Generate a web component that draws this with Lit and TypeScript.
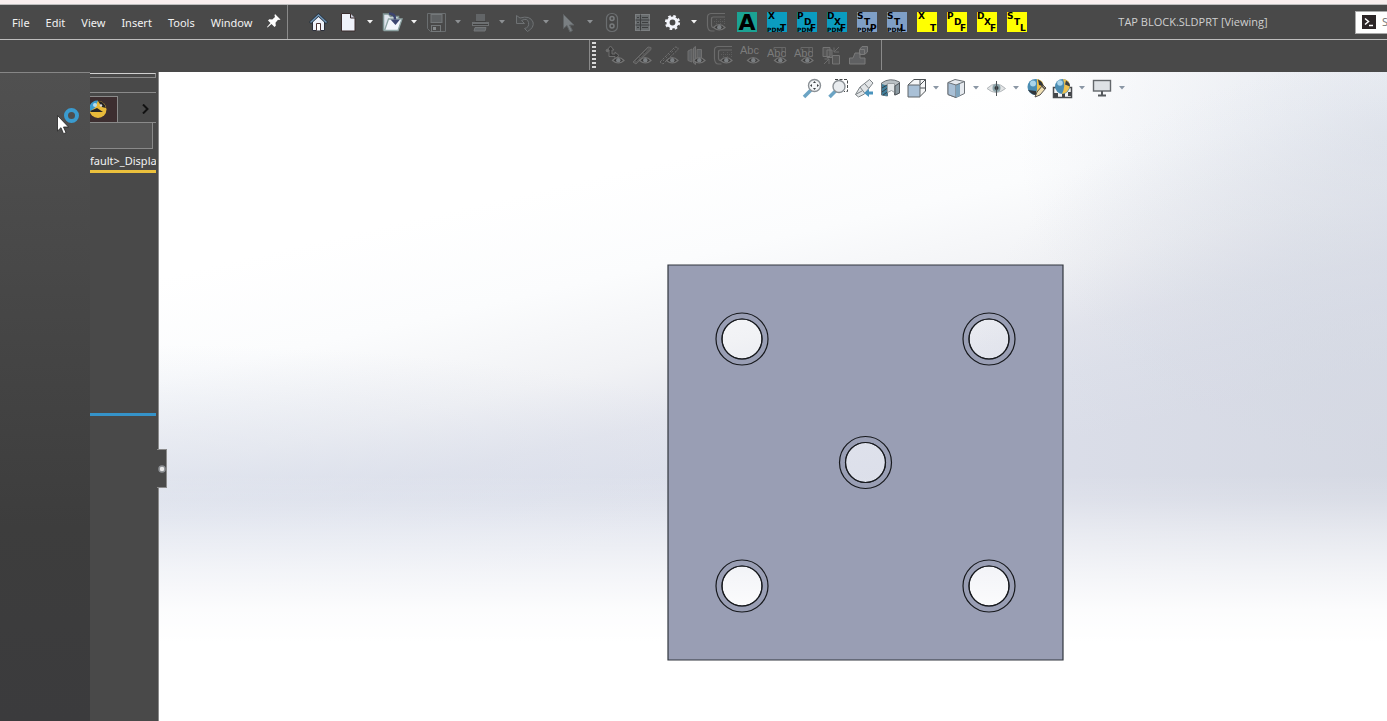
import { LitElement, html, svg, css } from "lit";
import { customElement } from "lit/decorators.js";

const eye = svg`<path d="M7.500 15.500q5.500-6 11.500 0q-5.500 5-11.500 0z" fill="#3b3b3b" stroke="#737373" stroke-width="1.200"/><circle cx="13.300" cy="15.300" r="2.200" fill="#7b7f82"/>`;

const icons: Record<string, unknown> = {
  home: svg`<path d="M4.500 9v9.500h12V9L10.500 4z" fill="#eef2fa" stroke="#2b2f3a"/><path d="M2 11L10.500 3l8.500 8" fill="none" stroke="#23303c" stroke-width="3"/><path d="M2.500 10.500L10.500 3l8 7.500" fill="none" stroke="#6f93b4" stroke-width="1.500"/><path d="M8.500 18.500v-7h4v7" fill="#fff" stroke="#4b3434"/>`,
  doc: svg`<path d="M3.500 1.500h9l4.500 4.500v13H3.500z" fill="#eff2fa" stroke="#3a2d2d"/><path d="M12.500 1.500V6H17" fill="#c9cedb" stroke="#3a2d2d"/>`,
  open: svg`<path d="M1.500 18.500V2h5l2 2.500h8v4" fill="#dfe5ee" stroke="#7f9595" stroke-width="1.500"/><path d="M2.500 18.500L6.500 7h13.500l-4 11.500z" fill="#f2f4fb" stroke="#8ea4a4" stroke-width="1.300"/><path d="M7 1.500q6.500 0 6 6" fill="none" stroke="#3c4470" stroke-width="2.500"/><path d="M8.500 7.500h9.500L13.500 13z" fill="#3c4470"/>`,
  save: svg`<path d="M1.500 1.500h18v18h-15l-3-3z" fill="none" stroke="#6a6e70" stroke-width="1"/><rect x="5" y="2.500" width="11" height="8" fill="#5e6163" stroke="#74787a"/><rect x="5.500" y="13.500" width="9" height="6" fill="#4a4a4a" stroke="#74787a"/><rect x="7" y="15" width="3" height="3" fill="#85898b"/>`,
  print: svg`<path d="M6 2h9v7H6z" fill="#626567"/><path d="M2 10h17v4H2z" fill="#6d7072"/><path d="M3 12.500h15M5 9.500h11" stroke="#3f3f3f"/><path d="M5 15.500h11l-1 3.500H4z" fill="#63676a" stroke="#747779"/>`,
  undo: svg`<path d="M2.500 3.500v8h8l-3-3q6-3 7 2t-4 6l3 3q7-4 5.500-9.500Q16 3 6 6z" fill="#4c4e4f" stroke="#6f7274"/>`,
  select: svg`<path d="M5.500 2.500v14l3.500-3 3 6.500 2.500-1.500-3-5.500h4.500z" fill="#7a7f82" stroke="#606466"/>`,
  rebuild: svg`<rect x="4.500" y="1.500" width="11" height="18" rx="5" fill="#474747" stroke="#6b6e70" stroke-width="1.200"/><circle cx="10" cy="6.500" r="2" fill="#4a4a4a" stroke="#787b7d" stroke-width="1.500"/><circle cx="10" cy="14" r="2" fill="#4a4a4a" stroke="#787b7d" stroke-width="1.500"/>`,
  props: svg`<rect x="3.500" y="2.500" width="14" height="16" fill="#686c6e" stroke="#7c7f81"/><path d="M8.500 2.500v16M3.500 8h14M3.500 13h14" stroke="#3d3f40"/><path d="M10 5.500h6M10 10.500h6M10 15.500h6M5 5.500h2M5 10.500h2M5 15.500h2" stroke="#3d3f40"/>`,
  gear: svg`<circle cx="10.500" cy="10.500" r="4.500" fill="none" stroke="#f3f5fb" stroke-width="3.200"/><circle cx="10.500" cy="10.500" r="6.500" fill="none" stroke="#f3f5fb" stroke-width="2.200" stroke-dasharray="2.600 2.505"/>`,
  sketch: svg`<path d="M19 1.500H5Q1.500 2 1.500 5v9q.5 5 4 5h3M19 5H7.500Q5.500 5 5.500 7v6q0 2.500 2 2.500" fill="none" stroke="#6b6b6b" stroke-width="1.200"/><path d="M18.500 7v5M14.500 7v5M10.500 7v5M8 9.500h11" stroke="#5c5c5c" stroke-dasharray="1 1"/>${eye}`,
  points: svg`<path d="M2 5l3.500-4L9 5H7v4h3V7l4 3.500-4 3.500v-2.500H4V5z" fill="#3d3d3d" stroke="#6f6f6f"/><circle cx="2.500" cy="5.500" r="1.800" fill="#6c6c6c"/>${eye}`,
  line: svg`<path d="M1 17L16 2l3 .5v2L4 19z" fill="#585858" stroke="#6b6b6b"/><path d="M4 16L16 4" stroke="#3d3d3d" stroke-dasharray="4 1.500"/>${eye}`,
  axis: svg`<path d="M1 17L16 2l3 .5v2L4 19z" fill="#464646" stroke="#707070" stroke-dasharray="2.500 1"/><path d="M4 16L16 4" stroke="#6b6b6b" stroke-dasharray="2 2"/>${eye}`,
  plane: svg`<path d="M2 6l4-2v13l-4-1.500zM7.500 3l2-1.500v18L7.500 18zM11 4.500h4.500V14H11z" fill="#5f6163" stroke="#707070"/>${eye}`,
  abc: svg`<text class="abc" x="0" y="9">Abc</text>${eye}`,
  abc2: svg`<path d="M10 2.500h8.500v9M7 5V2.500h8v5" fill="none" stroke="#686868"/><text class="abc" x="0" y="12">Abc</text>${eye}`,
  weld: svg`<path d="M2 2.500h7v9H2zM11.500 10.500h7v8.500h-7zM6 5h5v7.500H6z" fill="#565656" stroke="#757575"/><path d="M13 7l5-5M13 2.500V7h5M3 19l5-5M3.500 14H8v5" stroke="#6c6c6c" fill="none"/>`,
  boxes: svg`<path d="M1.500 13h3.500l2-5h5v5h5v6H1.500zM11.500 4.500h5v5h-5zM12 4l2-2.500h5.500v5.500l-3 2.500" fill="#5f6062" stroke="#7a7a7a"/>`,
  fit: svg`<path d="M2 19l7-7" stroke="#6ba4c4" stroke-width="3.500"/><circle cx="12.500" cy="7.500" r="6" fill="#f4f6f8" stroke="#8b9196" stroke-width="1.400"/><path d="M12.500 3l1.500 2h-3zM12.500 12l1.500-2h-3zM8 7.500l2-1.500v3zM17 7.500l-2-1.500v3z" fill="#3e4245"/>`,
  zoomArea: svg`<path d="M7 1.500h12.500v12H16" fill="none" stroke="#45484a" stroke-dasharray="3 1.500"/><path d="M1.500 19l6-6" stroke="#6ba4c4" stroke-width="3.500"/><circle cx="11" cy="8.500" r="6" fill="#e9ecef" stroke="#8b9196" stroke-width="1.400"/>`,
  previous: svg`<path d="M1.500 16.500l3 2.500 6-3L19 5l-3.500-3.500L6 9z" fill="#e2e5e7" stroke="#7c8286"/><path d="M6 9l4.500 6M10.500 5.500l4 4.500M1.500 16.500L8 13" stroke="#7c8286" fill="none"/><path d="M10 15l5-4v2.500h4v3h-4V19z" fill="#4a94bd"/>`,
  section: svg`<path d="M1.500 5Q10-1 19.500 4v11l-5 2V9q-4-3-7 0v9l-6-1z" fill="#b9c0c4" stroke="#6b7176"/><path d="M2 6l5.500 2v10L2 17z" fill="#417f9c"/><path d="M2 10l5-3M2 14l5.500-4M3 17l4.500-3" stroke="#33414a"/><path d="M7.500 5.500h7v9l-3-2-4 2z" fill="#e2e6e8" stroke="#9aa0a4"/><path d="M15 8l4.500-3v10L15 17z" fill="#8d9ba3" stroke="#50565b"/>`,
  orient: svg`<path d="M2 7l6-5.500h11.500V13L14 18.500M14 7l5.500-5.500M14 1.500v5M14 10h5" fill="#f5f6f7" stroke="#4d5256"/><path d="M2 7h12v12H2z" fill="#a9c0d6" stroke="#61666b"/>`,
  display: svg`<path d="M2 4.500L9 1.500l9.500 2v12L10 19.500l-8-3z" fill="#e6eaef" stroke="#6b7177"/><path d="M2 4.500l8 2.500v12.500l-8-3z" fill="#a9c0d6" stroke="#6b7177"/><path d="M10 7l4-2v13l-4 1.500z" fill="#7fa4bd"/><path d="M10 7l8.500-3.500" stroke="#6b7177"/>`,
  eye: svg`<path d="M1 10.500Q10 1.500 19.500 10.500 10 18.500 1 10.500z" fill="#e2e4e5" stroke="#b3b8bb"/><circle cx="10.500" cy="10" r="4" fill="#8ba3a9"/><circle cx="10.500" cy="10" r="2" fill="#32373a"/><path d="M10.500 3v15" stroke="#4d5256"/>`,
  appearance: svg`<circle cx="9.500" cy="9" r="8" fill="#4b8db3"/><circle cx="7" cy="5.500" r="3" fill="#a9d4ea"/><path d="M11 1q7 1 6.500 8-2 7-8 8 1-3 1.500-5z" fill="#efc14d"/><path d="M12 1.500q5 2 5.500 7L13 7zM2 12q4 5 8 5v-4z" fill="#30363b"/><path d="M9 19l2-5 6-7 3 3-6 7z" fill="#f0e0b4" stroke="#55504a"/><path d="M16 8l3 3" stroke="#55504a" stroke-width="1.500"/>`,
  scene: svg`<path d="M1.500 9.500h18v10h-18z" fill="#f4f4f4" stroke="#4a4d50" stroke-width="1.500"/><path d="M2 15h4v4H2zM10 15h3v4h-3zM16 14h3v4h-3z" fill="#44474a"/><circle cx="10.500" cy="8.500" r="7.500" fill="#4b8db3"/><circle cx="8" cy="5" r="2.800" fill="#a9d4ea"/><path d="M11 1q7 1 7 7-2 7-8 8 4-8 1-15z" fill="#efc14d"/><path d="M14 2.500q4 2 4 6l-5-2z" fill="#3c4042"/>`,
  monitor: svg`<rect x="1.500" y="2.500" width="17" height="10.500" fill="#dde1e5" stroke="#63676b" stroke-width="1.400"/><path d="M10 13v4M6 17.500h8" stroke="#55595d" stroke-width="2"/>`,
};

const icon = (name: string) => html`<svg class="icon" viewBox="0 0 21 21" aria-hidden="true">${icons[name]}</svg>`;

type Tool = { id: string; label: string; off?: boolean; menu?: boolean };

const tools: Tool[] = [
  { id: "home", label: "Home" },
  { id: "doc", label: "New", menu: true },
  { id: "open", label: "Open", menu: true },
  { id: "save", label: "Save", menu: true, off: true },
  { id: "print", label: "Print", menu: true, off: true },
  { id: "undo", label: "Undo", menu: true, off: true },
  { id: "select", label: "Select", menu: true, off: true },
  { id: "rebuild", label: "Rebuild", off: true },
  { id: "props", label: "File properties", off: true },
  { id: "gear", label: "Options", menu: true },
  { id: "sketch", label: "View sketches", off: true },
];

const hideShow: Tool[] = [
  { id: "points", label: "View points" },
  { id: "line", label: "View lines" },
  { id: "axis", label: "View axes" },
  { id: "plane", label: "View planes" },
  { id: "sketch", label: "View sketch" },
  { id: "abc", label: "View annotations" },
  { id: "abc2", label: "View top annotations" },
  { id: "abc2", label: "View reference annotations" },
  { id: "weld", label: "View relations" },
  { id: "boxes", label: "View bodies" },
];

const headsUp: Tool[] = [
  { id: "fit", label: "Zoom to fit" },
  { id: "zoomArea", label: "Zoom to area" },
  { id: "previous", label: "Previous view" },
  { id: "section", label: "Section view" },
  { id: "orient", label: "View orientation", menu: true },
  { id: "display", label: "Display style", menu: true },
  { id: "eye", label: "Hide or show items", menu: true },
  { id: "appearance", label: "Edit appearance" },
  { id: "scene", label: "Apply scene", menu: true },
  { id: "monitor", label: "View settings", menu: true },
];

const macros = [
  { text: "XT", fill: "#0b9cc0", pdm: true },
  { text: "PDF", fill: "#0b9cc0", pdm: true },
  { text: "DXF", fill: "#0b9cc0", pdm: true },
  { text: "STP", fill: "#7f9fc6", pdm: true },
  { text: "STL", fill: "#7f9fc6", pdm: true },
  { text: "XT", fill: "#ffff00", pdm: false },
  { text: "PDF", fill: "#ffff00", pdm: false },
  { text: "DXF", fill: "#ffff00", pdm: false },
  { text: "STL", fill: "#ffff00", pdm: false },
];

const holes = [[74, 74], [321, 74], [197.5, 197.5], [74, 321], [321, 321]];
const ring = (x: number, y: number, r: number) => `M${x - r} ${y}a${r} ${r} 0 1 0 ${2 * r} 0a${r} ${r} 0 1 0 ${-2 * r} 0z`;

@customElement("app-root")
export class AppRoot extends LitElement {
  static styles = css`
    :host { display: flex; flex-direction: column; height: 100vh; overflow: hidden; background: #494949; font: 11px/16px "Noto Sans", "Open Sans", sans-serif; color: #f2f2f2; }
    * { box-sizing: border-box; }
    button, input { font: inherit; color: inherit; margin: 0; padding: 0; border: 0; background: none; border-radius: 0; }
    button { display: flex; align-items: center; justify-content: center; flex: none; }
    svg { display: block; flex: none; }
    .edge { height: 4px; flex: none; background: #f8eeee; }
    .bar { display: flex; align-items: stretch; flex: none; height: 36px; border: solid #bdbdbd; border-width: 1px 0; }
    .menus { display: flex; align-items: center; padding: 2px 0 0 4px; width: 288px; border-right: 1px solid #8a8a8a; }
    .menu { padding: 0 8px; height: 24px; }
    .pin { width: 24px; height: 24px; margin: 0 1px 4px auto; }
    .tools { display: flex; align-items: center; padding-left: 15px; }
    .tool { width: 30px; height: 30px; }
    .icon { width: 21px; height: 21px; }
    .drop { width: 14px; height: 30px; }
    .macro { margin-left: 1px; margin-right: -1px; }
    .faint { color: #8d9093; }
    .title { flex: 1; align-self: center; text-align: center; color: #d0d0d0; font-family: "Open Sans", sans-serif; }
    .search { display: flex; align-items: center; gap: 6px; width: 32px; height: 23px; align-self: center; overflow: hidden; padding-left: 6px; background: #fff; border: 1px solid #aaa; border-right: 0; color: #777; }
    .search input { flex: none; width: 160px; }
    .search input::placeholder { color: #777; opacity: 1; }
    .second { display: flex; flex: none; height: 32px; justify-content: flex-start; }
    .strip { display: flex; align-items: center; width: 293px; height: 30px; margin-left: 589px; border: solid #8a8a8a; border-width: 0 1px; }
    .grip { width: 4px; height: 27px; margin: 0 6px 0 2px; background: repeating-linear-gradient(to bottom, #d8d8d8 0 2px, #494949 2px 4px); }
    .small { width: 27px; height: 28px; }
    .abc { font: 11px "Liberation Sans", sans-serif; fill: #7b7b7b; }
    .m { font: bold 9px "DejaVu Sans", sans-serif; fill: #000; }
    .big { font: bold 22px "DejaVu Sans", sans-serif; fill: #000; }
    .tiny { font: bold 6px "DejaVu Sans", sans-serif; fill: #000; }
    .body { display: flex; flex: 1; min-height: 0; }
    .panel { position: relative; flex: none; width: 90px; border-top: 1px solid #868686; background: linear-gradient(#505050 0%, #484848 30%, #3d3d3d 70%, #3b3b3d 100%); }
    .pointer { position: absolute; left: 56px; top: 34px; }
    .tree { display: flex; flex-direction: column; flex: none; width: 69px; padding-right: 2px; border-right: 1px solid #8a8a8a; overflow: hidden; }
    .head { height: 5px; margin-top: 1px; border: solid #8a8a8a; border-width: 1px 1px 1px 0; border-top-color: #d0d0d0; flex: none; }
    .tabs { display: flex; align-items: flex-end; justify-content: space-between; flex: none; height: 31px; margin-top: 14px; border: solid #8a8a8a; border-width: 1px 0; }
    .tab { width: 28px; height: 26px; justify-content: flex-start; background: #3d2e30; border: solid #8a8a8a; border-width: 1px 1px 0 0; }
    .next { width: 20px; height: 26px; }
    .filter { flex: none; width: 63px; height: 26px; background: #555; border: 1px solid #8a8a8a; border-left: 0; border-top: 0; }
    .name { flex: none; height: 24px; padding-top: 4px; white-space: nowrap; overflow: hidden; border-bottom: 3px solid #ebc03c; }
    .rollback { flex: none; height: 3px; margin-top: 240px; background: #3593c9; }
    .view { position: relative; flex: 1; min-width: 0;
      background:
        linear-gradient(rgba(255,255,255,0) 62%, rgba(255,255,255,.12) 66%, rgba(255,255,255,.4) 71%, rgba(255,255,255,.68) 77%, rgba(255,255,255,.92) 83%, #fff 88%),
        radial-gradient(60% 27% at 0% 69%, rgba(213,219,233,.75), rgba(218,223,235,0)),
        radial-gradient(36% 60% at 100% 58%, rgba(210,214,224,.7), rgba(210,214,224,0)),
        radial-gradient(30% 50% at 100% 10%, rgba(210,216,228,.6), rgba(210,216,228,0)),
        linear-gradient(167deg, #fff 22%, #fbfcfd 33%, #f1f2f5 43%, #e4e6ee 50%, #dfe2ec 55%, #dcdfea 62%); }
    .hud { display: flex; align-items: center; height: 32px; padding-left: 640px; color: #8b97a5; }
    .hud .tool { width: 26px; }
    .part { position: absolute; left: 508px; top: 192px; }
    .handle { position: absolute; left: -2px; top: 377px; width: 10px; height: 39px; background: #494949; border: 1px solid #8a8a8a; border-left: 0; }
  `;

  private drop(t: Tool) {
    return t.menu
      ? html`<button class="drop ${t.off ? "faint" : ""}" aria-label="${t.label} menu"><svg width="6" height="4" viewBox="0 0 6 4"><path d="M0 0h6L3 3.500z" fill="currentColor"/></svg></button>`
      : "";
  }

  private tool(t: Tool, cls = "tool") {
    return html`<button class=${cls} aria-label=${t.label}>${icon(t.id)}</button>${this.drop(t)}`;
  }

  private macro(m: (typeof macros)[number]) {
    const last = m.text.length - 1;
    return html`<button class="tool macro" aria-label="Export ${m.text}">
      <svg width="20" height="20" viewBox="0 0 20 20">
        <rect width="20" height="20" fill=${m.fill}></rect>
        ${m.pdm ? svg`<text class="tiny" x="0" y="20">PDM</text>` : ""}
        ${[...m.text].map((c, i) => svg`<text class="m" x=${i === 0 ? (last === 1 ? 1 : 0) : i === last ? 13 : 7} y=${i === 0 ? 7 : i === last ? 19 : 13}>${c}</text>`)}
      </svg>
    </button>`;
  }

  render() {
    return html`
      <div class="edge"></div>
      <header class="bar">
        <nav class="menus">
          ${["File", "Edit", "View", "Insert", "Tools", "Window"].map((m) => html`<button class="menu">${m}</button>`)}
          <button class="pin" aria-label="Pin menu"><svg width="14" height="14" viewBox="0 0 14 14"><path d="M8 0l5.500 5.500-1.500.5-1-.3-2.500 3 .3 3-1.300 1.300L4.500 10 .5 13.500 0 13l3.500-4L1 6.500 2.300 5.200l3 .3L8 3 7.500 1.500z" fill="#fff"/></svg></button>
        </nav>
        <div class="tools">
          ${tools.map((t) => this.tool(t))}
          <button class="tool macro" aria-label="Macro A"><svg width="20" height="20" viewBox="0 0 20 20"><rect width="20" height="20" fill="#1ba394"/><text class="big" x="10" y="18" text-anchor="middle">A</text></svg></button>
          ${macros.map((m) => this.macro(m))}
        </div>
        <div class="title">TAP BLOCK.SLDPRT [Viewing]</div>
        <label class="search">
          <svg width="14" height="14" viewBox="0 0 14 14"><rect width="14" height="14" fill="#2b2526"/><path d="M3 3.500L6.500 6.500 3 9.500M7 10.500h4" fill="none" stroke="#fff" stroke-width="1.500"/></svg>
          <input type="text" placeholder="S" aria-label="Search" />
        </label>
      </header>
      <div class="second">
        <div class="strip"><span class="grip"></span>${hideShow.map((t) => this.tool(t, "small"))}</div>
      </div>
      <main class="body">
        <aside class="panel">
          <svg class="pointer" width="24" height="28" viewBox="0 0 24 28"><circle cx="15.500" cy="8.500" r="5.500" fill="none" stroke="#3a9bcf" stroke-width="4"/><path d="M1.500 8.500v15.500l3.500-3.300 2.500 6 2.500-1-2.500-5.700h5z" fill="#fff" stroke="#222" stroke-width=".8"/></svg>
        </aside>
        <section class="tree">
          <div class="head"></div>
          <div class="tabs">
            <button class="tab" aria-label="Display manager"><svg width="18" height="20" viewBox="0 0 18 20"><circle cx="8" cy="9.500" r="8.500" fill="#e9b93a"/><path d="M0 5q3-5 8-4.500l-3 7-5 4z" fill="#3a9bd0"/><path d="M8 1q6 0 8 7l-4-1-2-3zM0 11l7-3 6 4H1z" fill="#262427"/><circle cx="5" cy="5" r="2" fill="#b9dcec"/><circle cx="11" cy="5.500" r="1.200" fill="#d8d8d8"/></svg></button>
            <button class="next" aria-label="More tabs"><svg width="8" height="10" viewBox="0 0 8 10"><path d="M1 0.500L5.500 5 1 9.500" fill="none" stroke="#111" stroke-width="2"/></svg></button>
          </div>
          <input class="filter" type="text" aria-label="Filter" />
          <div class="name">fault>_Displa</div>
          <div class="rollback"></div>
        </section>
        <section class="view">
          <div class="hud">${headsUp.map((t) => this.tool(t))}</div>
          <svg class="part" width="398" height="398" viewBox="-1 -1 398 398">
            <path fill="#999eb4" fill-rule="evenodd" stroke="#33373f" stroke-width="1.200" d=${"M0 0h395v395H0z" + holes.map(([x, y]) => ring(x, y, 20)).join("")}></path>
            ${holes.map(([x, y]) => svg`<path fill="none" stroke="#16181c" stroke-width="1.200" d=${ring(x, y, 26) + ring(x, y, 20)}></path>`)}
          </svg>
          <button class="handle" aria-label="Collapse panel"><svg width="8" height="8" viewBox="0 0 8 8"><circle cx="4" cy="4" r="3" fill="#e8e8e8" stroke="#8d9094" stroke-width="1.500"/></svg></button>
        </section>
      </main>
    `;
  }
}
